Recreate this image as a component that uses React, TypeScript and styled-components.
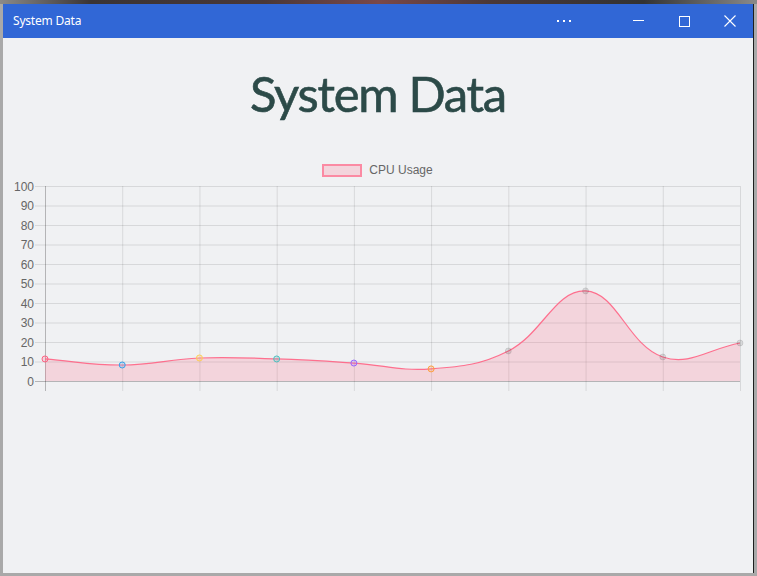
import React from "react";
import styled, { createGlobalStyle } from "styled-components";

const GlobalStyle = createGlobalStyle`
  html, body { margin: 0; padding: 0; }
  body {
    width: 757px;
    height: 576px;
    overflow: hidden;
    background: #a9a9a9;
    font-family: "Open Sans", "Liberation Sans", sans-serif;
  }
`;

const Desktop = styled.div`
  width: 757px;
  height: 576px;
  display: flex;
  flex-direction: column;
  background: #a9a9a9;
`;

const TopStrip = styled.div`
  height: 4px;
  flex: none;
  background: linear-gradient(
    90deg,
    #8a8a8a 0%,
    #3a3434 12%,
    #4a3838 35%,
    #7a4848 50%,
    #4a3838 65%,
    #333 85%,
    #8a8a8a 100%
  );
`;

const WindowFrame = styled.div`
  margin-left: 3px;
  width: 750px;
  height: 569px;
  display: flex;
  flex-direction: column;
  border-right: 1px solid #1e1e1e;
  background: #f0f1f3;
`;

const TitleBar = styled.div`
  height: 34px;
  flex: none;
  display: flex;
  align-items: center;
  background: #3167d6;
  color: #fff;
`;

const TitleText = styled.div`
  flex: 1;
  padding-left: 10px;
  font-family: "Noto Sans", "Open Sans", sans-serif;
  font-size: 12px;
  letter-spacing: -0.2px;
  color: #fff;
  line-height: 34px;
`;

const CaptionButton = styled.div<{ $w: number }>`
  width: ${(p) => p.$w}px;
  height: 34px;
  display: flex;
  align-items: center;
  justify-content: center;
`;

const Content = styled.div`
  flex: 1;
  display: flex;
  flex-direction: column;
`;

const HeadingBlock = styled.div`
  height: 122px;
  display: flex;
  justify-content: center;
  padding-top: 27px;
  box-sizing: border-box;
`;

const Heading = styled.h1`
  margin: 0;
  font-family: Lato, "Open Sans", sans-serif;
  font-weight: 400;
  font-size: 49px;
  letter-spacing: -1.3px;
  line-height: 56px;
  color: #2c4a48;
  -webkit-text-stroke: 0.6px #2c4a48;
`;

const LegendRow = styled.div`
  height: 18px;
  margin-top: 1px;
  display: flex;
  align-items: center;
  justify-content: center;
  gap: 7px;
  margin-left: -1px;
`;

const LegendBox = styled.div`
  width: 36px;
  height: 9px;
  margin-top: 1px;
  border: 2px solid rgba(255, 99, 132, 0.65);
  background: rgba(255, 99, 132, 0.2);
`;

const LegendLabel = styled.span`
  font-family: "Liberation Sans", Arial, sans-serif;
  font-size: 12px;
  color: #666;
`;

const PlotSvg = styled.svg`
  display: block;
  width: 750px;
  height: 219px;
`;

// chart geometry (svg coordinates; svg origin = page (3,179))
const OX = -3;
const OY = -179;
const LEFT = 45 + OX;
const RIGHT = 740 + OX;
const TOP = 186 + OY;
const BOTTOM = 381 + OY;
const values = [11.3, 8.2, 11.8, 11.3, 9.2, 6.2, 15.4, 46.2, 12.3, 19.5];
const pointColors = [
  "255,99,132",
  "54,162,235",
  "255,206,86",
  "75,192,192",
  "153,102,255",
  "255,159,64",
];

type P = { x: number; y: number };

function splinePath(pts: P[], t = 0.4) {
  const cps = pts.map((cur, i) => {
    const prev = pts[i - 1] || cur;
    const next = pts[i + 1] || cur;
    const d01 = Math.hypot(cur.x - prev.x, cur.y - prev.y);
    const d12 = Math.hypot(next.x - cur.x, next.y - cur.y);
    let s01 = d01 / (d01 + d12);
    let s12 = d12 / (d01 + d12);
    if (isNaN(s01)) s01 = 0;
    if (isNaN(s12)) s12 = 0;
    const fa = t * s01;
    const fb = t * s12;
    return {
      p: { x: cur.x - fa * (next.x - prev.x), y: cur.y - fa * (next.y - prev.y) },
      n: { x: cur.x + fb * (next.x - prev.x), y: cur.y + fb * (next.y - prev.y) },
    };
  });
  let d = `M${pts[0].x},${pts[0].y}`;
  for (let i = 1; i < pts.length; i++) {
    const c1 = cps[i - 1].n;
    const c2 = cps[i].p;
    d += ` C${c1.x},${Math.min(c1.y, BOTTOM)} ${c2.x},${Math.min(c2.y, BOTTOM)} ${pts[i].x},${pts[i].y}`;
  }
  return d;
}

function Chart() {
  const step = (RIGHT - LEFT) / 9;
  const yStep = (BOTTOM - TOP) / 10;
  const pts = values.map((v, i) => ({
    x: LEFT + i * step,
    y: BOTTOM - (v / 100) * (BOTTOM - TOP),
  }));
  const line = splinePath(pts);
  const area = `${line} L${RIGHT},${BOTTOM} L${LEFT},${BOTTOM} Z`;
  return (
    <PlotSvg viewBox="0 0 750 219">
      {Array.from({ length: 11 }, (_, i) => {
        const y = TOP + i * yStep;
        const isZero = i === 10;
        return (
          <g key={"h" + i}>
            <line
              x1={LEFT - 10}
              x2={RIGHT}
              y1={y + 0.5}
              y2={y + 0.5}
              stroke={isZero ? "rgba(0,0,0,0.25)" : "rgba(0,0,0,0.1)"}
              strokeWidth={1}
            />
            <text
              x={LEFT - 11}
              y={y + 4.5}
              textAnchor="end"
              fontFamily="'Liberation Sans', Arial, sans-serif"
              fontSize={12}
              fill="#666"
            >
              {100 - i * 10}
            </text>
          </g>
        );
      })}
      {Array.from({ length: 10 }, (_, i) => {
        const x = LEFT + i * step;
        return (
          <line
            key={"v" + i}
            x1={x + 0.5}
            x2={x + 0.5}
            y1={TOP}
            y2={BOTTOM + 10}
            stroke={i === 0 ? "rgba(0,0,0,0.25)" : "rgba(0,0,0,0.1)"}
            strokeWidth={1}
          />
        );
      })}
      <path d={area} fill="rgba(255,99,132,0.2)" />
      <path d={line} fill="none" stroke="rgba(255,99,132,0.9)" strokeWidth={1.2} />
      {pts.map((p, i) => {
        const c = pointColors[i];
        return (
          <circle
            key={"p" + i}
            cx={p.x}
            cy={p.y}
            r={3}
            fill={c ? `rgba(${c},0.2)` : "rgba(0,0,0,0.1)"}
            stroke={c ? `rgba(${c},1)` : "rgba(0,0,0,0.1)"}
            strokeWidth={1}
          />
        );
      })}
    </PlotSvg>
  );
}

export default function App() {
  return (
    <>
      <GlobalStyle />
      <Desktop>
        <TopStrip />
        <WindowFrame>
          <TitleBar>
            <TitleText>System Data</TitleText>
            <CaptionButton $w={46}>
              <svg width="16" height="4" viewBox="0 0 16 4">
                <rect x="1" y="1" width="2" height="2" fill="#fff" />
                <rect x="7" y="1" width="2" height="2" fill="#fff" />
                <rect x="13" y="1" width="2" height="2" fill="#fff" />
              </svg>
            </CaptionButton>
            <CaptionButton $w={28} />
            <CaptionButton $w={46}>
              <svg width="11" height="10" viewBox="0 0 11 10">
                <line x1="0" y1="4.5" x2="11" y2="4.5" stroke="#fff" strokeWidth="1" />
              </svg>
            </CaptionButton>
            <CaptionButton $w={46}>
              <svg width="11" height="11" viewBox="0 0 11 11">
                <rect x="0.5" y="0.5" width="10" height="10" fill="none" stroke="#fff" strokeWidth="1" />
              </svg>
            </CaptionButton>
            <CaptionButton $w={46}>
              <svg width="12" height="12" viewBox="0 0 12 12">
                <path d="M0.5 0.5 L11.5 11.5 M11.5 0.5 L0.5 11.5" stroke="#fff" strokeWidth="1.1" />
              </svg>
            </CaptionButton>
          </TitleBar>
          <Content>
            <HeadingBlock>
              <Heading>System Data</Heading>
            </HeadingBlock>
            <LegendRow>
              <LegendBox />
              <LegendLabel>CPU Usage</LegendLabel>
            </LegendRow>
            <Chart />
          </Content>
        </WindowFrame>
      </Desktop>
    </>
  );
}
